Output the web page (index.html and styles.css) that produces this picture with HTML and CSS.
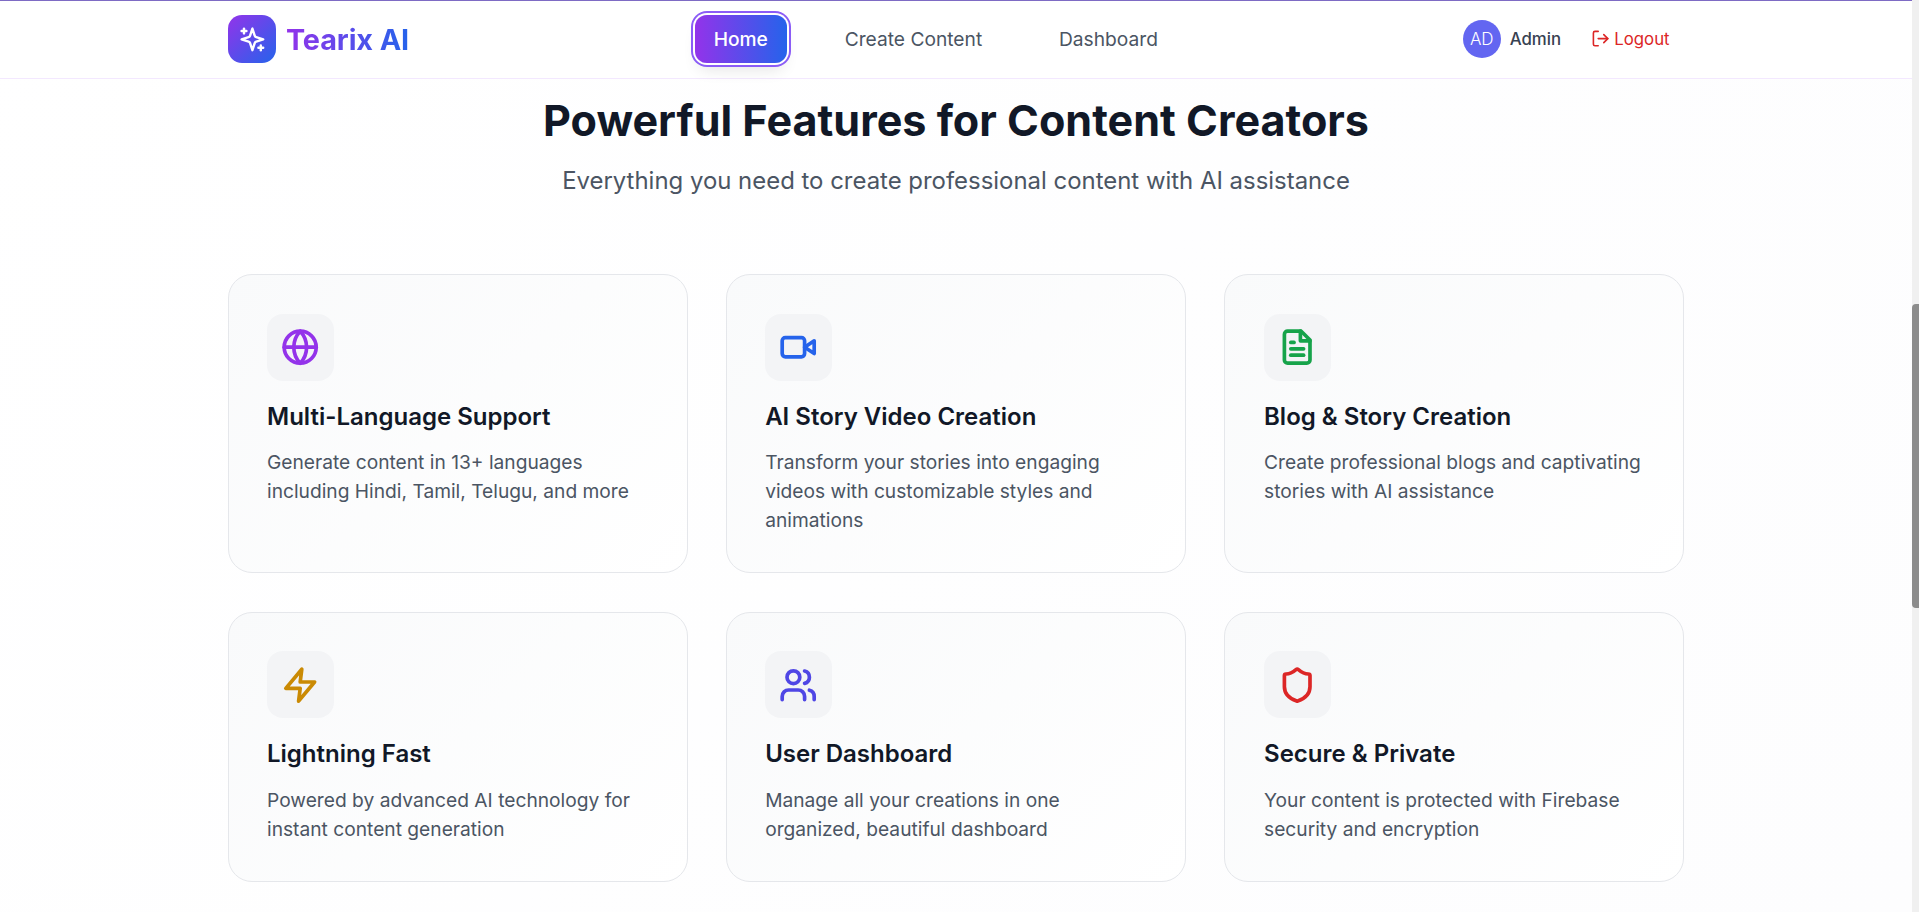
FILE: index.html
```html
<!DOCTYPE html>
<html lang="en">
<head>
<meta charset="utf-8">
<title>Tearix AI</title>
<link rel="stylesheet" href="styles.css">
</head>
<body>
<div class="viewport">
  <div class="page">
    <header class="nav">
      <div class="nav-inner">
        <a class="brand">
          <span class="brand-icon">
            <svg viewBox="0 0 24 24" fill="none" stroke="#fff" stroke-width="2" stroke-linecap="round" stroke-linejoin="round"><path d="m12 3-1.912 5.813a2 2 0 0 1-1.275 1.275L3 12l5.813 1.912a2 2 0 0 1 1.275 1.275L12 21l1.912-5.813a2 2 0 0 1 1.275-1.275L21 12l-5.813-1.912a2 2 0 0 1-1.275-1.275L12 3Z"/><path d="M5 3v4"/><path d="M19 17v4"/><path d="M3 5h4"/><path d="M17 19h4"/></svg>
          </span>
          <span class="brand-name">Tearix AI</span>
        </a>
        <nav class="links">
          <a class="link active">Home</a>
          <a class="link">Create Content</a>
          <a class="link">Dashboard</a>
        </nav>
        <div class="user">
          <span class="avatar">AD</span>
          <span class="user-name">Admin</span>
          <a class="logout">
            <svg viewBox="0 0 24 24" fill="none" stroke="currentColor" stroke-width="2" stroke-linecap="round" stroke-linejoin="round"><path d="M9 21H5a2 2 0 0 1-2-2V5a2 2 0 0 1 2-2h4"/><polyline points="16 17 21 12 16 7"/><line x1="21" y1="12" x2="9" y2="12"/></svg>
            Logout
          </a>
        </div>
      </div>
    </header>
    <main class="features">
      <h1 class="title">Powerful Features for Content Creators</h1>
      <p class="subtitle">Everything you need to create professional content with AI assistance</p>
      <div class="grid">
        <article class="card">
          <span class="icon purple"><svg viewBox="0 0 24 24"><circle cx="12" cy="12" r="10"/><path d="M12 2a14.5 14.5 0 0 0 0 20 14.5 14.5 0 0 0 0-20"/><path d="M2 12h20"/></svg></span>
          <h3>Multi-Language Support</h3>
          <p>Generate content in 13+ languages including Hindi, Tamil, Telugu, and more</p>
        </article>
        <article class="card">
          <span class="icon blue"><svg viewBox="0 0 24 24"><path d="m22 8-6 4 6 4V8Z"/><rect x="2" y="6" width="14" height="12" rx="2" ry="2"/></svg></span>
          <h3>AI Story Video Creation</h3>
          <p>Transform your stories into engaging videos with customizable styles and animations</p>
        </article>
        <article class="card">
          <span class="icon green"><svg viewBox="0 0 24 24"><path d="M14.5 2H6a2 2 0 0 0-2 2v16a2 2 0 0 0 2 2h12a2 2 0 0 0 2-2V7.5L14.5 2z"/><polyline points="14 2 14 8 20 8"/><line x1="16" y1="13" x2="8" y2="13"/><line x1="16" y1="17" x2="8" y2="17"/><line x1="10" y1="9" x2="8" y2="9"/></svg></span>
          <h3>Blog &amp; Story Creation</h3>
          <p>Create professional blogs and captivating stories with AI assistance</p>
        </article>
        <article class="card">
          <span class="icon amber"><svg viewBox="0 0 24 24"><polygon points="13 2 3 14 12 14 11 22 21 10 12 10 13 2"/></svg></span>
          <h3>Lightning Fast</h3>
          <p>Powered by advanced AI technology for instant content generation</p>
        </article>
        <article class="card">
          <span class="icon indigo"><svg viewBox="0 0 24 24"><path d="M16 21v-2a4 4 0 0 0-4-4H6a4 4 0 0 0-4 4v2"/><circle cx="9" cy="7" r="4"/><path d="M22 21v-2a4 4 0 0 0-3-3.87"/><path d="M16 3.13a4 4 0 0 1 0 7.75"/></svg></span>
          <h3>User Dashboard</h3>
          <p>Manage all your creations in one organized, beautiful dashboard</p>
        </article>
        <article class="card">
          <span class="icon red"><svg viewBox="0 0 24 24"><path d="M20 13c0 5-3.5 7.5-7.66 8.95a1 1 0 0 1-.67-.01C7.5 20.5 4 18 4 13V6a1 1 0 0 1 1-1c2 0 4.5-1.2 6.24-2.72a1.17 1.17 0 0 1 1.52 0C14.51 3.81 17 5 19 5a1 1 0 0 1 1 1z"/></svg></span>
          <h3>Secure &amp; Private</h3>
          <p>Your content is protected with Firebase security and encryption</p>
        </article>
      </div>
    </main>
  </div>
  <div class="scrollbar"><div class="thumb"></div></div>
</div>
</body>
</html>
```
FILE: styles.css
```css
* { box-sizing: border-box; }
html, body { margin: 0; height: 100%; overflow: hidden; }
body { font-family: Inter, "Liberation Sans", sans-serif; color: #111827; background: #fff; }
.viewport { display: flex; height: 912px; border-top: 1px solid #7e6bc4; }
.page { flex: 1; min-width: 0; display: flex; flex-direction: column; background: linear-gradient(135deg, #fff, #fdfdfe); }
.nav { height: 78px; flex: none; background: #fff; border-bottom: 1px solid #f3e8ff; }
.nav-inner { width: 1456px; height: 77px; padding-bottom: 1px; margin: 0 auto; display: flex; align-items: center; justify-content: space-between; }
.brand { display: flex; align-items: center; gap: 10px; }
.brand-icon { width: 48px; height: 48px; border-radius: 14px; background: linear-gradient(135deg, #9333ea, #2563eb); display: flex; align-items: center; justify-content: center; }
.brand-icon svg { width: 28.8px; height: 28.8px; }
.brand-name { font-size: 28.8px; font-weight: 700; letter-spacing: -0.1px; background: linear-gradient(90deg, #9333ea, #2563eb); -webkit-background-clip: text; background-clip: text; color: transparent; }
.links { display: flex; align-items: center; gap: 38.4px; }
.link { padding: 0 19.2px; height: 48px; display: flex; align-items: center; border-radius: 12px; font-size: 19.2px; color: #4b5563; font-weight: 400; }
.link.active { font-weight: 500; color: #fff; background: linear-gradient(90deg, #9333ea, #2563eb); box-shadow: 0 0 0 2px #fff, 0 0 0 4px #8b5cf6, 0 10px 15px -3px rgba(0,0,0,.1); }
.user { display: flex; align-items: center; font-size: 16.8px; }
.avatar { width: 38.4px; height: 38.4px; border-radius: 50%; background: #6366f1; color: #fff; display: flex; align-items: center; justify-content: center; font-size: 17px; font-weight: 300; }
.user-name { margin-left: 8.8px; font-weight: 500; color: #374151; }
.logout { margin-left: 30px; padding-right: 14.4px; display: flex; align-items: center; gap: 4px; color: #dc2626; }
.logout svg { width: 19.2px; height: 19.2px; }
.features { width: 1456px; margin: 0 auto; }
.title { margin: 15.4px 0 0; text-align: center; font-size: 43.1px; line-height: 52px; font-weight: 700; color: #111827; }
.subtitle { margin: 18.8px 0 0; text-align: center; font-size: 23.93px; line-height: 32px; color: #4b5563; }
.grid { margin-top: 77.2px; display: grid; grid-template-columns: repeat(3, 1fr); gap: 38.8px 38.4px; }
.card { border: 1px solid #e5e7eb; border-radius: 24px; padding: 38.4px 38.4px 37.6px 38px; background: linear-gradient(135deg, #f9fafb, #fff); }
.card:nth-child(3n) { padding-left: 38.8px; }
.icon { width: 67px; height: 67px; border-radius: 16px; background: #f3f4f6; display: flex; align-items: center; justify-content: center; }
.icon svg { width: 38.4px; height: 38.4px; fill: none; stroke: currentColor; stroke-width: 2.3; stroke-linecap: round; stroke-linejoin: round; }
.purple { color: #9333ea; } .blue { color: #2563eb; } .green { color: #16a34a; }
.amber { color: #ca8a04; } .indigo { color: #4f46e5; } .red { color: #dc2626; }
.card h3 { margin: 19px 0 0; font-size: 24px; line-height: 34px; font-weight: 600; color: #111827; }
.card p { margin: 14.4px 0 0; font-size: 19.2px; line-height: 28.8px; color: #4b5563; }
.scrollbar { flex: none; width: 7px; margin-top: -1px; background: #f0f0f0; }
.thumb { width: 7px; height: 304px; margin-top: 304px; background: #8c8c8c; border-radius: 4px 0 0 4px; }
```
